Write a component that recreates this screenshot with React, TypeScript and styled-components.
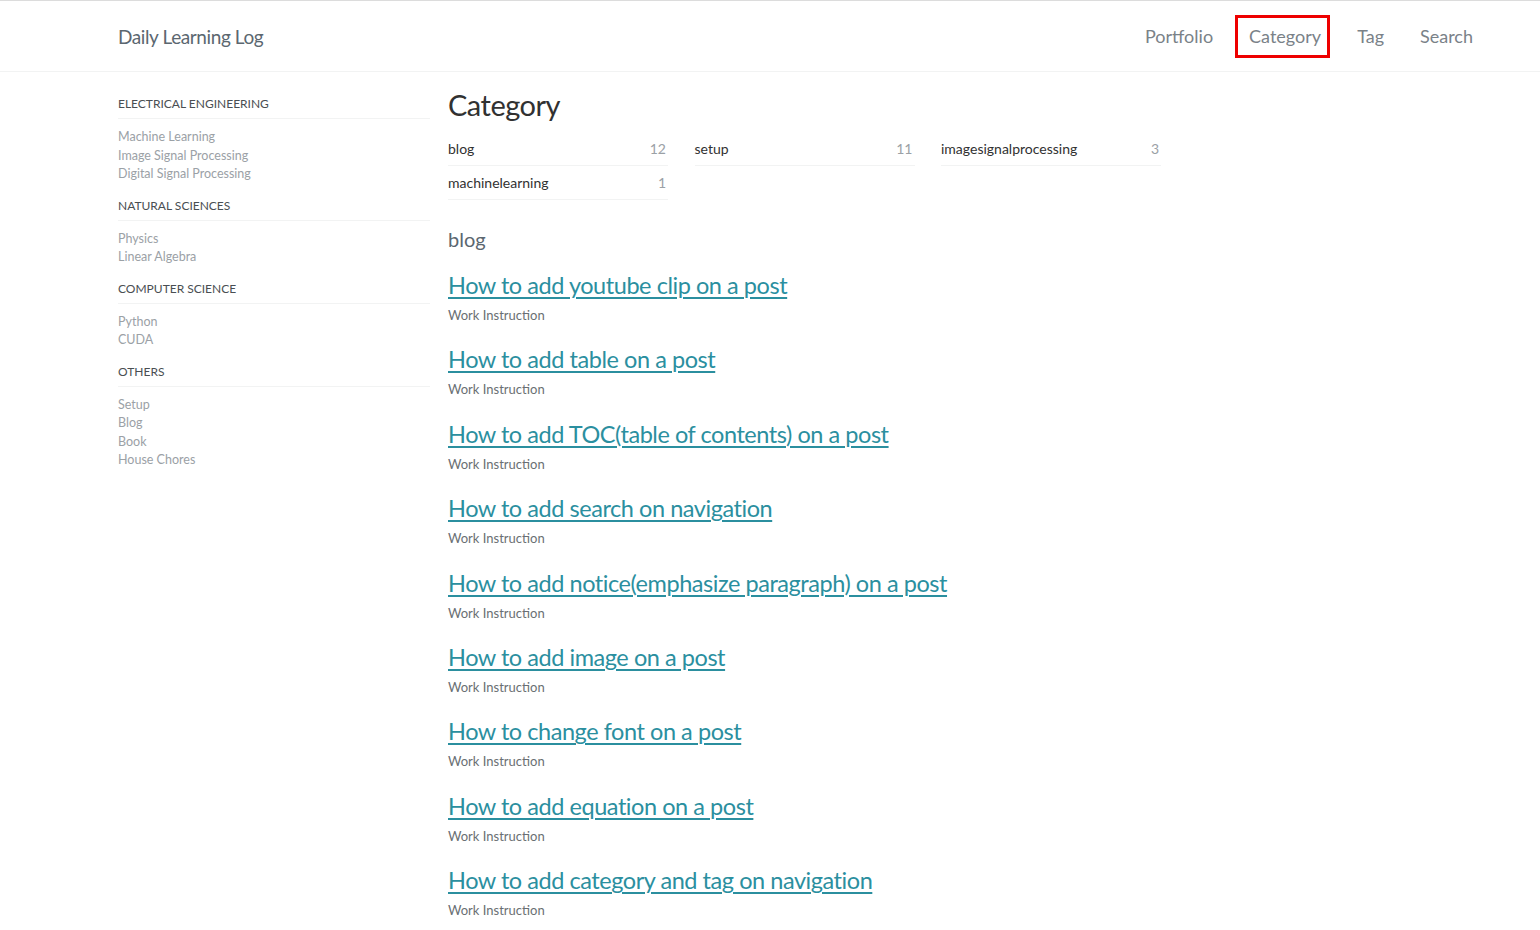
import React from 'react';
import styled, { createGlobalStyle } from 'styled-components';

const GlobalStyle = createGlobalStyle`
  body {
    margin: 0;
    padding: 0;
    background: #fff;
    font-family: 'Lato', 'Liberation Sans', sans-serif;
    color: #494e52;
  }
`;

const Masthead = styled.header`
  border-top: 1px solid #dcdcdc;
  border-bottom: 1px solid #f2f3f3;
  height: 70px;
`;

const MastInner = styled.div`
  display: flex;
  align-items: center;
  justify-content: space-between;
  height: 100%;
  padding: 0 55px 0 118px;
`;

const Logo = styled.a`
  font-size: 19px;
  color: #5b6770;
  text-decoration: none;
  letter-spacing: -0.4px;
`;

const Nav = styled.nav`
  display: flex;
  align-items: center;
  gap: 10px;
`;

const NavItem = styled.a<{ $active?: boolean }>`
  font-size: 18px;
  color: #7a8288;
  text-decoration: none;
  padding: 8px ${p => (p.$active ? '6px' : '9px')} 8px 11px;
  margin-right: ${p => (p.$active ? '3px' : '0')};
  border: 3px solid ${p => (p.$active ? '#ee0000' : 'transparent')};
  line-height: 21px;
`;

const Layout = styled.div`
  display: flex;
  padding: 20px 0 0 118px;
`;

const Sidebar = styled.aside`
  width: 312px;
  flex-shrink: 0;
  margin-right: 18px;
`;

const SideGroup = styled.div`
  margin-bottom: 10px;
`;

const SideHeading = styled.div`
  font-size: 12px;
  color: #494e52;
  text-transform: uppercase;
  padding: 4px 0 7px;
  border-bottom: 1px solid #f2f3f3;
  margin-bottom: 9px;
`;

const SideLink = styled.a`
  display: block;
  font-size: 12.5px;
  color: #9ba1a6;
  line-height: 18.5px;
  text-decoration: none;
`;

const Main = styled.main`
  flex: 1;
`;

const Title = styled.h1`
  font-size: 29px;
  font-weight: 400;
  color: #313131;
  margin: 0 0 15px;
  letter-spacing: -0.5px;
  line-height: 26px;
`;

const CatGrid = styled.div`
  display: grid;
  grid-template-columns: repeat(3, 220px);
  column-gap: 26.5px;
  width: 720px;
`;

const CatRow = styled.a`
  display: flex;
  justify-content: space-between;
  font-size: 14px;
  line-height: 17px;
  color: #313131;
  text-decoration: none;
  padding: 7px 0 8px;
  border-bottom: 1px solid #f2f3f3;
  margin-bottom: 1px;
`;

const Count = styled.span`
  color: #9ba1a6;
  padding-right: 2px;
`;

const Section = styled.h2`
  font-size: 20px;
  font-weight: 400;
  line-height: 24px;
  color: #5b6770;
  margin: 26px 0 19px;
`;

const Post = styled.article`
  margin-bottom: 20.4px;
`;

const PostTitle = styled.a`
  display: inline-block;
  font-size: 23.5px;
  color: #2b8f9f;
  text-decoration: underline;
  text-underline-offset: 3px;
  text-decoration-thickness: 2px;
  letter-spacing: -0.45px;
  line-height: 30px;
`;

const PostMeta = styled.div`
  font-size: 13px;
  color: #6a6f73;
  margin-top: 6px;
  line-height: 18px;
`;

const sidebar = [
  { title: 'Electrical Engineering', items: ['Machine Learning', 'Image Signal Processing', 'Digital Signal Processing'] },
  { title: 'Natural Sciences', items: ['Physics', 'Linear Algebra'] },
  { title: 'Computer Science', items: ['Python', 'CUDA'] },
  { title: 'Others', items: ['Setup', 'Blog', 'Book', 'House Chores'] },
];

const categories = [
  { name: 'blog', count: 12 },
  { name: 'setup', count: 11 },
  { name: 'imagesignalprocessing', count: 3 },
  { name: 'machinelearning', count: 1 },
];

const posts = [
  'How to add youtube clip on a post',
  'How to add table on a post',
  'How to add TOC(table of contents) on a post',
  'How to add search on navigation',
  'How to add notice(emphasize paragraph) on a post',
  'How to add image on a post',
  'How to change font on a post',
  'How to add equation on a post',
  'How to add category and tag on navigation',
];

const App: React.FC = () => (
  <>
    <GlobalStyle />
    <Masthead>
      <MastInner>
        <Logo href="#">Daily Learning Log</Logo>
        <Nav>
          <NavItem href="#">Portfolio</NavItem>
          <NavItem href="#" $active>Category</NavItem>
          <NavItem href="#">Tag</NavItem>
          <NavItem href="#">Search</NavItem>
        </Nav>
      </MastInner>
    </Masthead>
    <Layout>
      <Sidebar>
        {sidebar.map(g => (
          <SideGroup key={g.title}>
            <SideHeading>{g.title}</SideHeading>
            {g.items.map(i => (
              <SideLink key={i} href="#">{i}</SideLink>
            ))}
          </SideGroup>
        ))}
      </Sidebar>
      <Main>
        <Title>Category</Title>
        <CatGrid>
          {categories.map(c => (
            <CatRow key={c.name} href="#">
              <span>{c.name}</span>
              <Count>{c.count}</Count>
            </CatRow>
          ))}
        </CatGrid>
        <Section>blog</Section>
        {posts.map(p => (
          <Post key={p}>
            <PostTitle href="#">{p}</PostTitle>
            <PostMeta>Work Instruction</PostMeta>
          </Post>
        ))}
      </Main>
    </Layout>
  </>
);

export default App;
